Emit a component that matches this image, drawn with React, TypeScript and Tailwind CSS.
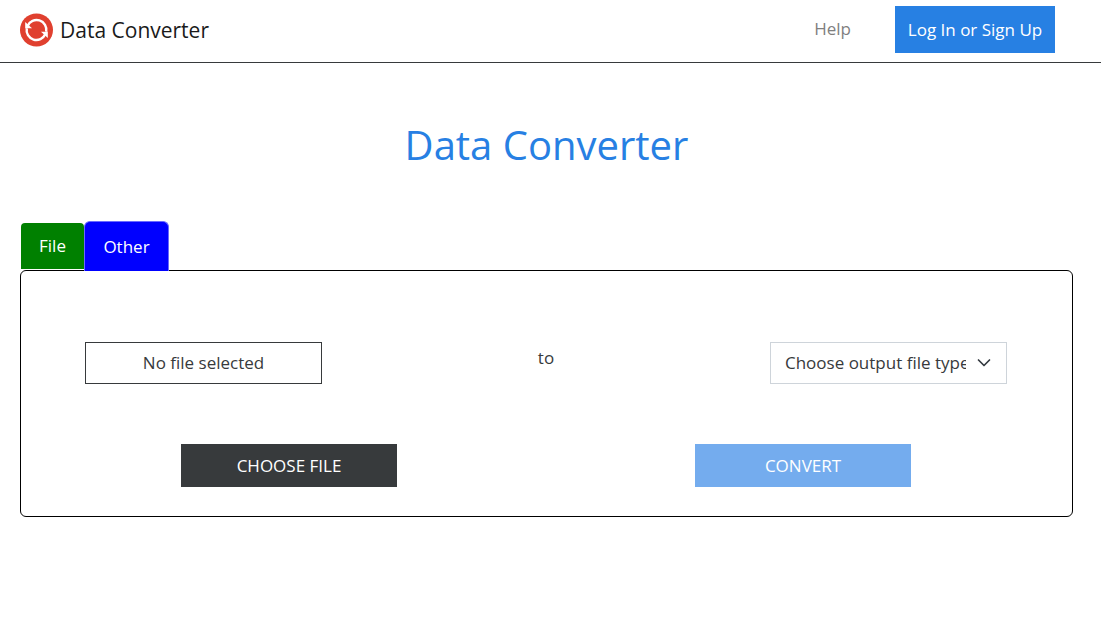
import React, { useState } from 'react';

function Logo() {
  return (
    <svg viewBox="0 0 34 34" className="size-[34px] shrink-0" aria-hidden="true">
      <circle cx="16.5" cy="17" r="16.5" fill="#e0402f" />
      <g fill="none" stroke="#fff" strokeWidth="2.4">
        <path d="M7.6 12.9A9.8 9.8 0 0 1 26.2 18.7" />
        <path d="M25.4 21.1A9.8 9.8 0 0 1 6.8 15.3" />
      </g>
      <path d="M5.2 15.2V9L12 15.2Z" fill="#fff" />
      <path d="M27.8 18.8V25L21 18.8Z" fill="#fff" />
    </svg>
  );
}

export default function App() {
  const [tab, setTab] = useState('other');
  return (
    <div className="min-h-screen bg-white font-['Open_Sans','Noto_Sans',sans-serif] text-[17px] leading-6 text-[#373a3c]">
      <header className="flex h-[63px] items-start justify-between border-b border-[#373a3c] pl-5 pr-[46px] pt-1.5">
        <a href="#" className="flex items-center gap-1.5 pt-1.5 text-[21px] leading-9 text-[#1a1a1a]">
          <Logo />
          Data Converter
        </a>
        <nav className="flex items-start gap-11">
          <a href="#help" className="pt-[11px] text-[#7f7f7f]">Help</a>
          <button type="button" className="h-[47px] w-40 whitespace-nowrap bg-[#2780e3] text-white">
            Log In or Sign Up
          </button>
        </nav>
      </header>

      <main className="pl-5 pr-7 pt-[54px]">
        <h1 className="text-center text-[40px] leading-14 text-[#2780e3]">Data Converter</h1>

        <div role="tablist" className="mt-12 flex items-start pl-px">
          <button
            type="button"
            role="tab"
            aria-selected={tab === 'file'}
            onClick={() => setTab('file')}
            className="mt-0.5 h-[46px] w-[63px] rounded-t bg-[#008000] text-white"
          >
            File
          </button>
          <button
            type="button"
            role="tab"
            aria-selected={tab === 'other'}
            onClick={() => setTab('other')}
            className="relative -mb-px h-[50px] w-[85px] rounded-t-md border border-b-0 border-[#6a6aff] bg-[#0000ff] text-white"
          >
            Other
          </button>
        </div>

        <section className="rounded-md border border-black pb-[29px] pt-[71px]">
          <div className="flex items-start justify-between pl-16 pr-[65px]">
            <div className="flex h-[42px] w-[237px] items-center justify-center border border-[#373a3c]">
              No file selected
            </div>
            <span className="pt-1">to</span>
            <div className="relative w-[237px]">
              <select
                aria-label="Output file type"
                className="h-[42px] w-full appearance-none border border-[#ced4da] bg-white pl-3.5 pr-10"
              >
                <option>Choose output file type</option>
              </select>
              <svg
                viewBox="0 0 16 16"
                className="pointer-events-none absolute right-[15px] top-[13px] size-4"
                fill="none"
                stroke="#343a40"
                strokeWidth="1.7"
                strokeLinecap="round"
                strokeLinejoin="round"
                aria-hidden="true"
              >
                <path d="m2.5 5 5.5 5.5 5.5-5.5" />
              </svg>
            </div>
          </div>
          <div className="mt-15 grid grid-cols-2 justify-items-center pl-[11px] pr-3">
            <button type="button" className="h-[43px] w-[216px] bg-[#373a3c] text-white">
              CHOOSE FILE
            </button>
            <button type="button" disabled className="h-[43px] w-[216px] bg-[#74acee] text-white">
              CONVERT
            </button>
          </div>
        </section>
      </main>
    </div>
  );
}
